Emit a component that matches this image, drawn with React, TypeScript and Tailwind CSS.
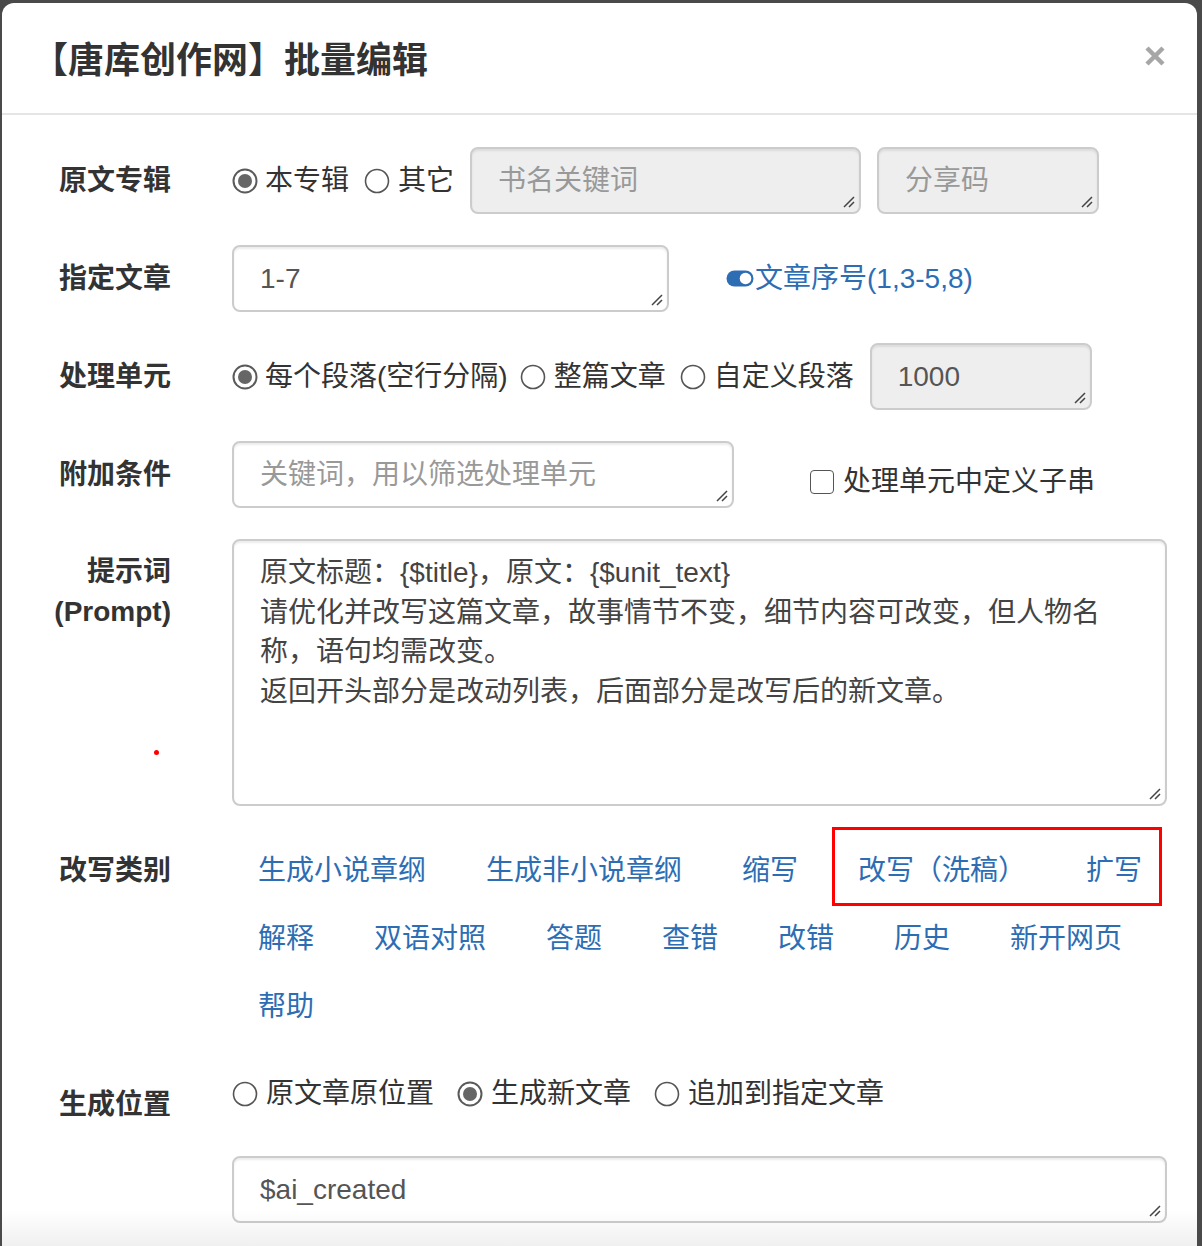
import React from 'react';

const Radio: React.FC<{ checked?: boolean; className?: string }> = ({ checked, className }) => (
  <svg width="26" height="26" viewBox="0 0 26 26" className={'shrink-0 ' + (className ?? '')}>
    <circle cx="13" cy="13" r="11.5" fill="#fff" stroke={checked ? '#5a5a5a' : '#555'} strokeWidth={checked ? 2 : 1.6} />
    {checked && <circle cx="13" cy="13" r="7" fill="#666" />}
  </svg>
);

const Grip: React.FC = () => (
  <svg width="14" height="14" viewBox="0 0 14 14" className="absolute right-[4px] bottom-[4px]">
    <path d="M13 3 L3 13 M13 8 L8 13" stroke="#444" strokeWidth="1.5" />
  </svg>
);

const Field: React.FC<{ gray?: boolean; muted?: boolean; className?: string; children?: React.ReactNode }> = ({
  gray,
  muted,
  className,
  children,
}) => (
  <div
    className={
      'relative h-[67px] rounded-[8px] border-2 border-[#ccc] pl-[26px] flex items-center shadow-[inset_0_2px_2px_rgba(0,0,0,0.075)] ' +
      (gray ? 'bg-[#eee] ' : 'bg-white ') +
      (muted ? 'text-[#999] ' : 'text-[#555] ') +
      (className ?? '')
    }
  >
    {children}
    <Grip />
  </div>
);

const Row: React.FC<{ label: React.ReactNode; className?: string; labelClass?: string; children?: React.ReactNode }> = ({
  label,
  className,
  labelClass,
  children,
}) => (
  <div className={'flex ' + (className ?? 'items-center')}>
    <div className={'w-[169px] shrink-0 text-right font-bold text-[#333] ' + (labelClass ?? '')}>{label}</div>
    <div className="ml-[61px] flex-1">{children}</div>
  </div>
);

const links1 = ['生成小说章纲', '生成非小说章纲', '缩写', '改写（洗稿）', '扩写'];
const links2 = ['解释', '双语对照', '答题', '查错', '改错', '历史', '新开网页', '帮助'];

export default function App() {
  return (
    <div className="relative h-[1246px] overflow-hidden bg-[#4a4a4a] pt-[3px] pl-[2px] pr-[5px] [font-family:'Liberation_Sans','Noto_Sans_CJK_SC',sans-serif] text-[28px] leading-[40px] text-[#333]">
      <div className="h-[1260px] rounded-t-[12px] bg-white">
        {/* header */}
        <div className="flex h-[112px] items-center justify-between border-b-2 border-[#e5e5e5] pl-[30px] pr-[32px]">
          <h4 className="mt-[6px] text-[36px] font-bold leading-[44px] text-[#333]">【唐库创作网】批量编辑</h4>
          <svg width="20" height="20" viewBox="0 0 20 20" className="-mt-[4px]">
            <path d="M2 2 L18 18 M18 2 L2 18" stroke="#a6a6a6" strokeWidth="4.5" />
          </svg>
        </div>

        {/* body */}
        <div className="pt-[32px] pr-[30px]">
          <Row label="原文专辑">
            <div className="flex items-center">
              <Radio checked />
              <span className="ml-[7px]">本专辑</span>
              <Radio className="ml-[15px]" />
              <span className="ml-[8px]">其它</span>
              <Field gray muted className="ml-[16px] w-[391px]">书名关键词</Field>
              <Field gray muted className="ml-[16px] w-[222px]">分享码</Field>
            </div>
          </Row>

          <Row label="指定文章" className="items-center mt-[31px]">
            <div className="flex items-center">
              <Field className="w-[437px]">1-7</Field>
              <svg width="28" height="17" viewBox="0 0 28 17" className="ml-[57px] shrink-0">
                <rect x="0.5" y="0.5" width="27" height="16" rx="8" fill="#2d6db4" />
                <circle cx="19.5" cy="8.5" r="5.8" fill="#fff" />
              </svg>
              <span className="ml-[1px] text-[#2d6db4]">文章序号(1,3-5,8)</span>
            </div>
          </Row>

          <Row label="处理单元" className="items-center mt-[31px]">
            <div className="flex items-center">
              <Radio checked />
              <span className="ml-[7px]">每个段落(空行分隔)</span>
              <Radio className="ml-[12px]" />
              <span className="ml-[8px]">整篇文章</span>
              <Radio className="ml-[14px]" />
              <span className="ml-[8px]">自定义段落</span>
              <Field gray className="ml-[16px] w-[222px]">1000</Field>
            </div>
          </Row>

          <Row label="附加条件" className="items-center mt-[31px]">
            <div className="flex items-center">
              <Field muted className="w-[502px]">关键词，用以筛选处理单元</Field>
              <div className="ml-[76px] flex items-center pt-[14px]">
                <span className="h-[24px] w-[24px] rounded-[4px] border-[1.5px] border-[#555] bg-white" />
                <span className="ml-[9px]">处理单元中定义子串</span>
              </div>
            </div>
          </Row>

          <Row label={
            <div className="flex flex-col items-end">
              <span>提示词</span>
              <span>(Prompt)</span>
              <span className="mt-[118px] mr-[12px] h-[5px] w-[5px] rounded-full bg-[#f00]" />
            </div>
          } className="items-start mt-[31px]" labelClass="pt-[13px]">
            <div className="relative h-[267px] rounded-[8px] border-2 border-[#ccc] bg-white pl-[26px] pt-[12px] leading-[39.5px] text-[#444] shadow-[inset_0_2px_2px_rgba(0,0,0,0.075)]">
              <div>原文标题：{'{$title}'}，原文：{'{$unit_text}'}</div>
              <div>请优化并改写这篇文章，故事情节不变，细节内容可改变，但人物名</div>
              <div>称，语句均需改变。</div>
              <div>返回开头部分是改动列表，后面部分是改写后的新文章。</div>
              <Grip />
            </div>
          </Row>

          <Row label="改写类别" className="items-start mt-[45px]">
            <div className="relative flex flex-wrap gap-x-[60px] gap-y-[28px] pl-[26px] text-[#2d6db4]">
              {links1.concat(links2).map((t) => (
                <a key={t} className="cursor-pointer whitespace-nowrap">
                  {t}
                </a>
              ))}
              <div className="pointer-events-none absolute left-[600px] top-[-24px] h-[79px] w-[330px] border-[3px] border-[#f00]" />
            </div>
          </Row>

          <Row label="生成位置" className="items-start mt-[47px]" labelClass="pt-[11px]">
            <div className="flex items-center">
              <Radio />
              <span className="ml-[8px]">原文章原位置</span>
              <Radio checked className="ml-[23px]" />
              <span className="ml-[8px]">生成新文章</span>
              <Radio className="ml-[23px]" />
              <span className="ml-[8px]">追加到指定文章</span>
            </div>
          </Row>

          <Row label="" className="items-center mt-[31px]">
            <Field className="w-full">$ai_created</Field>
          </Row>
        </div>
      </div>
      <div className="pointer-events-none absolute bottom-0 left-[2px] right-[5px] h-[36px] bg-linear-to-b from-black/0 to-black/[0.06]" />
    </div>
  );
}
